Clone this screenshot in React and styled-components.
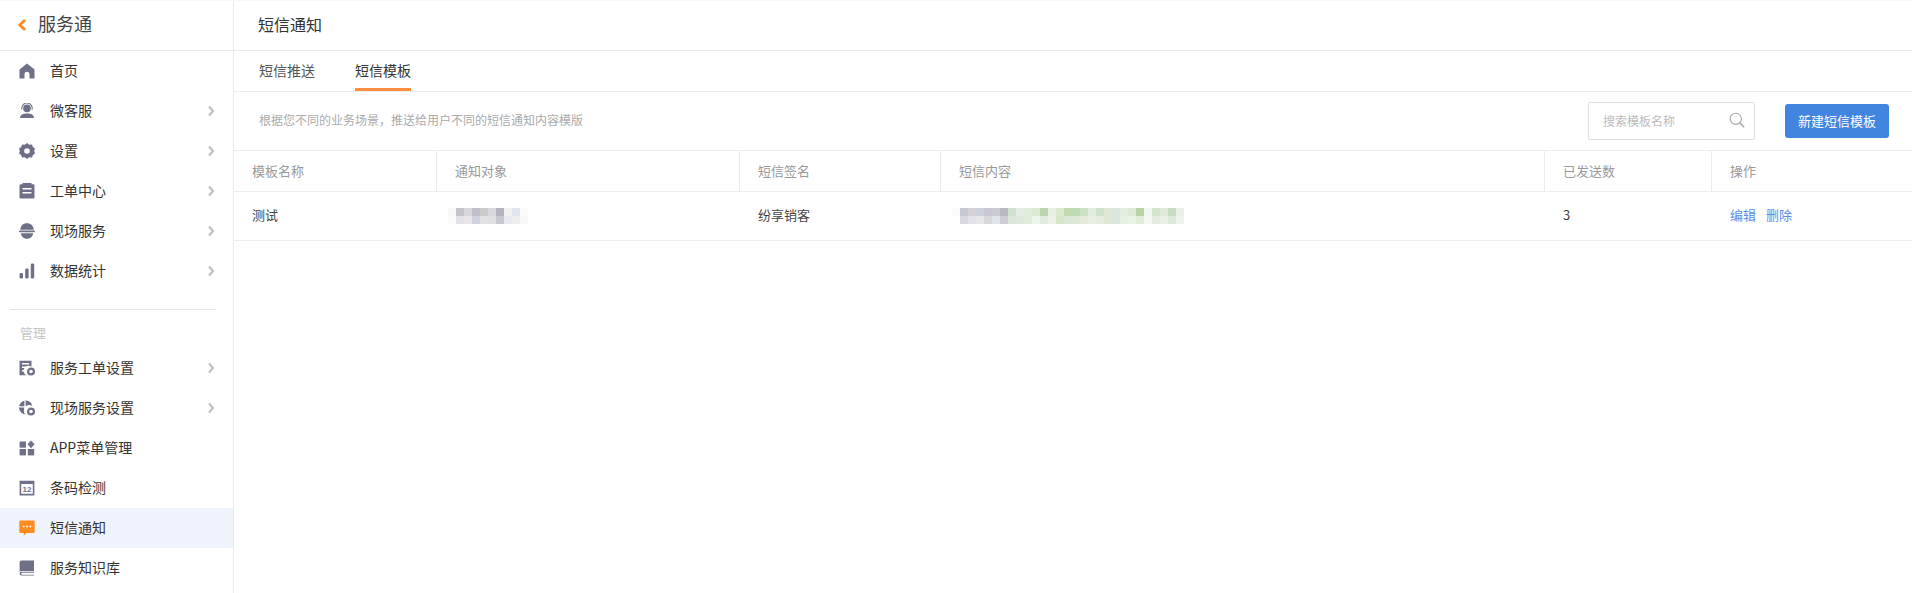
import React from "react";
import styled, { createGlobalStyle } from "styled-components";

const GlobalStyle = createGlobalStyle`
  html, body {
    margin: 0;
    padding: 0;
    height: 100%;
    background: #fff;
    overflow: hidden;
  }
  body {
    font-family: "Noto Sans CJK SC", "Liberation Sans", sans-serif;
    color: #333;
  }
  * { box-sizing: border-box; }
`;

const Page = styled.div`
  display: flex;
  height: 593px;
  border-top: 1px solid #f7f7fb;
  overflow: hidden;
`;

const Sidebar = styled.aside`
  flex: 0 0 234px;
  border-right: 1px solid #e9e9f2;
`;

const SideHead = styled.div`
  display: flex;
  align-items: center;
  height: 50px;
  padding: 0 0 1px 17px;
  gap: 11px;
  font-size: 18px;
  color: #444;
  border-bottom: 1px solid #e9e9f2;

  span {
    padding-bottom: 4px;
  }
`;

const NavItem = styled.div`
  display: flex;
  align-items: center;
  height: 40px;
  padding: 0 19px 0 19px;
  font-size: 14px;
  color: #333;
  background: ${(p) => (p.$active ? "#eff3fb" : "transparent")};

  span {
    margin-left: 15px;
    padding-bottom: 2px;
  }
  svg:last-child:not(:first-child) {
    margin-left: auto;
  }
`;

const SideDivider = styled.div`
  height: 1px;
  width: 206px;
  margin: 18px 0 0 10px;
  background: #e4e4e4;
`;

const SideLabel = styled.div`
  height: 38px;
  padding: 13px 0 0 20px;
  font-size: 13px;
  line-height: 20px;
  color: #c4c4c4;
`;

const Main = styled.main`
  flex: 1;
  min-width: 0;
`;

const TopBar = styled.div`
  display: flex;
  align-items: center;
  height: 50px;
  padding: 0 0 4px 24px;
  font-size: 16px;
  color: #333;
  border-bottom: 1px solid #e9e9f2;
`;

const Tabs = styled.div`
  display: flex;
  gap: 40px;
  height: 41px;
  padding-left: 25px;
  border-bottom: 1px solid #ececec;
`;

const Tab = styled.div`
  height: 40px;
  line-height: 38px;
  font-size: 14px;
  color: ${(p) => (p.$active ? "#333" : "#555")};
  border-bottom: 3px solid ${(p) => (p.$active ? "#ff8f3f" : "transparent")};
`;

const Toolbar = styled.div`
  display: flex;
  align-items: center;
  height: 59px;
  padding: 0 23px 0 25px;
  border-bottom: 1px solid #ececec;
`;

const Hint = styled.div`
  flex: 1;
  padding-bottom: 4px;
  font-size: 12px;
  color: #aaa;
`;

const SearchBox = styled.label`
  display: flex;
  align-items: center;
  width: 167px;
  height: 38px;
  margin-right: 30px;
  padding: 0 9px 3px 14px;
  border: 1px solid #dedede;
  border-radius: 2px;

  input {
    flex: 1;
    min-width: 0;
    border: 0;
    outline: 0;
    padding: 1px 0 0;
    font: inherit;
    font-size: 12px;
    background: transparent;
  }
  input::placeholder {
    color: #bbb;
    opacity: 1;
  }
`;

const PrimaryButton = styled.button`
  width: 104px;
  height: 34px;
  border: 0;
  border-radius: 3px;
  padding: 0 0 2px;
  font: inherit;
  font-size: 13px;
  color: #fff;
  background: #4285e0;
`;

const Row = styled.div`
  display: grid;
  grid-template-columns: 203px 303px 201px 604px 167px 1fr;
  height: ${(p) => (p.$head ? "41px" : "49px")};
  border-bottom: 1px solid #ececec;
`;

const HeadCell = styled.div`
  display: flex;
  align-items: center;
  padding: 0 0 2px 18px;
  font-size: 13px;
  color: #999;
  border-right: 1px solid #ececec;

  &:last-child {
    border-right: 0;
  }
`;

const Cell = styled.div`
  display: flex;
  align-items: center;
  gap: 10px;
  padding: ${(p) => (p.$mosaic ? "0 0 0 11px" : "0 0 4px 18px")};
  font-size: 13px;
  color: #444;
`;

const ActionLink = styled.a`
  color: #5b8ee6;
  cursor: pointer;
`;

const iconColor = "#6e7088";

const Svg = ({ children, color = iconColor }) => (
  <svg width="16" height="16" viewBox="0 0 16 16" fill={color} style={{ flex: "none" }}>
    {children}
  </svg>
);

const HomeIcon = () => (
  <Svg>
    <path d="M8 .4 15.500 6.400V15.400H10.500V11.200a2.500 2.500 0 0 0-5 0V15.400H.5V6.400Z" />
  </Svg>
);

const AgentIcon = () => (
  <Svg>
    <circle cx="8" cy="5.400" r="3.800" />
    <path d="M2.800 6.500V5.200a5.200 5.200 0 0 1 10.400 0V6.500" fill="none" stroke={iconColor} strokeWidth="1.100" />
    <path d="M1 15c0-3.200 3-4.600 7-4.600s7 1.400 7 4.600Z" />
  </Svg>
);

const GearIcon = () => (
  <Svg>
    <path
      fillRule="evenodd"
      d="M8 0 10.200 1.800 13 1.400 13.900 4 16 5.600 15.200 8 16 10.400 13.900 12 13 14.600 10.200 14.200 8 16 5.800 14.200 3 14.600 2.100 12 0 10.400.8 8 0 5.600 2.100 4 3 1.400 5.800 1.800ZM8 5.200a2.800 2.800 0 1 0 0 5.600 2.800 2.800 0 0 0 0-5.600Z"
    />
  </Svg>
);

const ClipboardIcon = () => (
  <Svg>
    <path
      fillRule="evenodd"
      d="M3.500 0h9v1.200h1.700A1.300 1.300 0 0 1 15.500 2.500V14.200a1.300 1.300 0 0 1-1.300 1.300H1.800A1.300 1.300 0 0 1 .5 14.200V2.500A1.300 1.300 0 0 1 1.800 1.200H3.500ZM3.500 5v1.600h9V5Zm0 4v1.600h9V9Z"
    />
  </Svg>
);

const HelmetIcon = () => (
  <Svg>
    <path d="M1.300 6.800C1.300 3 4.200.3 8 .3s6.700 2.700 6.700 6.500Z" />
    <rect x="0" y="7.400" width="16" height="1.800" rx=".9" />
    <path d="M2 10.200h12c0 3.100-2.600 5.500-6 5.500s-6-2.400-6-5.500Z" />
  </Svg>
);

const BarsIcon = () => (
  <Svg>
    <rect x=".6" y="10" width="3.400" height="5.600" rx="1.300" />
    <rect x="6.200" y="5.500" width="3.400" height="10.100" rx="1.300" />
    <rect x="11.800" y=".5" width="3.400" height="15.100" rx="1.300" />
  </Svg>
);

const OrderSetIcon = () => (
  <Svg>
    <path d="M.5 .8h12v5.700A5 5 0 0 0 7 15.200H.5Z" />
    <path d="M3 3.800h7M3 7.200h4.500M3 10.800h2.500" stroke="#fff" strokeWidth="1.400" />
    <circle cx="12" cy="11.500" r="2.900" fill="none" stroke={iconColor} strokeWidth="2.200" />
  </Svg>
);

const FieldSetIcon = () => (
  <Svg>
    <path d="M7 .5a7 7 0 0 1 6.300 5.500A5 5 0 0 0 7 14.500 7 7 0 0 1 7 .5Z" />
    <path d="M6 .5v13M0 6.800h9" stroke="#fff" strokeWidth="1.200" />
    <circle cx="12" cy="11.500" r="2.900" fill="none" stroke={iconColor} strokeWidth="2.200" />
  </Svg>
);

const AppsIcon = () => (
  <Svg>
    <rect x=".6" y="1.500" width="6.400" height="6.200" />
    <rect x=".6" y="9" width="6.400" height="6.400" />
    <rect x="8.800" y="9" width="6.400" height="6.400" />
    <path d="M12 .4 15.500 4.300 12 8.200 8.500 4.300Z" />
  </Svg>
);

const BarcodeIcon = () => (
  <Svg>
    <path fillRule="evenodd" d="M.6 .8h14.800v14.600H.6ZM2.200 4v9.800h11.600V4Z" />
    <text x="8" y="12" fontSize="8" fontWeight="700" textAnchor="middle" fontFamily="Liberation Sans, sans-serif">12</text>
  </Svg>
);

const SmsIcon = () => (
  <Svg color="#ff8a1f">
    <path d="M1.500.5h13a1.200 1.200 0 0 1 1.200 1.200v10a1.200 1.200 0 0 1-1.200 1.200H7.500L4.800 15.600V12.900H1.500A1.200 1.200 0 0 1 .3 11.700V1.700A1.200 1.200 0 0 1 1.500.5Z" />
    <circle cx="4.600" cy="6.600" r="1" fill="#fff" />
    <circle cx="8" cy="6.600" r="1" fill="#fff" />
    <circle cx="11.400" cy="6.600" r="1" fill="#fff" />
  </Svg>
);

const BookIcon = () => (
  <Svg>
    <path d="M3 .5h12V11H3a2.200 2.200 0 0 0-2.400 1.300V2.800A2.200 2.200 0 0 1 3 .5Z" />
    <path d="M.6 13.200A2.200 2.200 0 0 1 3 11.800h12v.9H3.200a1 1 0 0 0 0 2h11.800v.9H3A2.200 2.200 0 0 1 .6 13.200Z" />
  </Svg>
);

const Chevron = () => (
  <svg width="7" height="12" viewBox="0 0 7 12" fill="none" stroke="#bcbcc4" strokeWidth="2">
    <path d="M2 1.500 6 6 2 10.500" />
  </svg>
);

const BackArrow = () => (
  <svg width="10" height="12" viewBox="0 0 10 12" fill="none" stroke="#ff8a1f" strokeWidth="2.800">
    <path d="M8 1 2.800 6 8 11" />
  </svg>
);

const SearchIcon = () => (
  <svg width="16" height="16" viewBox="0 0 16 16" fill="none" stroke="#aaa" strokeWidth="1.100">
    <circle cx="6.800" cy="6.800" r="5.600" />
    <path d="m10.900 10.900 4.300 4.300" strokeWidth="1.500" />
  </svg>
);

// blurred personal data in the reference, two rows of 8px blocks
const Mosaic = ({ rows }) => (
  <svg width={rows[0].length * 8} height="16" shapeRendering="crispEdges">
    {rows.map((row, y) =>
      row.map((c, x) => <rect key={`${x}-${y}`} x={x * 8} y={y * 8} width="8" height="8" fill={`#${c}`} />)
    )}
  </svg>
);

const targetMosaic = [
  "f8f8f8 c4c4cc d8d8dc bfc0cc cccbcc d9d9dd b4b3bf f0f0ee e2e5f0 fafafa".split(" "),
  "fbfbfb e2e3ea e8e6e8 d0d3dd e2e1e4 e0e0e3 c8c8d0 e8eaef eeeef0 f8f8f8".split(" "),
];

const contentMosaic = [
  "fbfbfb c8c8d4 d6d0d8 ced1d9 c9c8d2 caccd4 b8b8c2 d2e0cf e4ede4 dfecdb dcead2 b9d5ae e8efe4 d9e8cf c0d9ae bfd9b2 cce0c4 e3ece0 cfe2cb e0e8d3 d8e6dc e3eee0 deebd4 b8d4a4 f0f6f2 d2e5cc dfebd8 c6dcc0 eaf0e8".split(" "),
  "ffffff d8d8e0 e2e2e8 e6e6e8 d8d8da e2e4ec ccccd2 dde6da dfe8dc e0ebdc eef5ea e2ecde edf2e8 d8e6c8 dbe8d6 dde9d6 e4ebdc e8f0e4 e4eddf e0e8d2 d9e6de e8f0e4 eaf3e6 e0ecd8 f2f7f2 e4ebe0 e8f1e4 dceada edf2ea".split(" "),
];

const mainNav = [
  { label: "首页", icon: <HomeIcon /> },
  { label: "微客服", icon: <AgentIcon />, more: true },
  { label: "设置", icon: <GearIcon />, more: true },
  { label: "工单中心", icon: <ClipboardIcon />, more: true },
  { label: "现场服务", icon: <HelmetIcon />, more: true },
  { label: "数据统计", icon: <BarsIcon />, more: true },
];

const adminNav = [
  { label: "服务工单设置", icon: <OrderSetIcon />, more: true },
  { label: "现场服务设置", icon: <FieldSetIcon />, more: true },
  { label: "APP菜单管理", icon: <AppsIcon /> },
  { label: "条码检测", icon: <BarcodeIcon /> },
  { label: "短信通知", icon: <SmsIcon />, active: true },
  { label: "服务知识库", icon: <BookIcon /> },
];

const columns = ["模板名称", "通知对象", "短信签名", "短信内容", "已发送数", "操作"];

const renderNav = (items) =>
  items.map((item) => (
    <NavItem key={item.label} $active={item.active}>
      {item.icon}
      <span>{item.label}</span>
      {item.more && <Chevron />}
    </NavItem>
  ));

export default function App() {
  return (
    <>
      <GlobalStyle />
      <Page>
        <Sidebar>
          <SideHead>
            <BackArrow />
            <span>服务通</span>
          </SideHead>
          {renderNav(mainNav)}
          <SideDivider />
          <SideLabel>管理</SideLabel>
          {renderNav(adminNav)}
        </Sidebar>
        <Main>
          <TopBar>短信通知</TopBar>
          <Tabs>
            <Tab>短信推送</Tab>
            <Tab $active>短信模板</Tab>
          </Tabs>
          <Toolbar>
            <Hint>根据您不同的业务场景，推送给用户不同的短信通知内容模版</Hint>
            <SearchBox>
              <input placeholder="搜索模板名称" />
              <SearchIcon />
            </SearchBox>
            <PrimaryButton>新建短信模板</PrimaryButton>
          </Toolbar>
          <Row $head>
            {columns.map((c) => (
              <HeadCell key={c}>{c}</HeadCell>
            ))}
          </Row>
          <Row>
            <Cell>测试</Cell>
            <Cell $mosaic>
              <Mosaic rows={targetMosaic} />
            </Cell>
            <Cell>纷享销客</Cell>
            <Cell $mosaic>
              <Mosaic rows={contentMosaic} />
            </Cell>
            <Cell>3</Cell>
            <Cell>
              <ActionLink>编辑</ActionLink>
              <ActionLink>删除</ActionLink>
            </Cell>
          </Row>
        </Main>
      </Page>
    </>
  );
}
